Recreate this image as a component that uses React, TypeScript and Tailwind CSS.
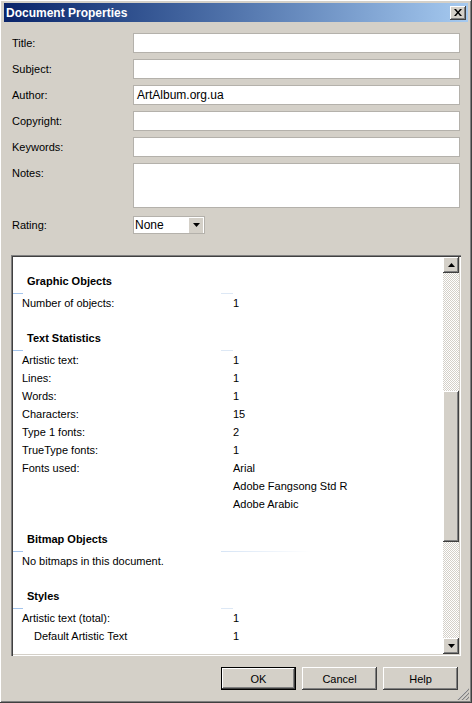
import React from "react";

const raised =
  "shadow-[inset_-1px_-1px_#404040,inset_1px_1px_#ffffff,inset_-2px_-2px_#808080,inset_2px_2px_#d4d0c8]";

function Field({ label, value, tall }: { label: string; value?: string; tall?: boolean }) {
  return (
    <div className="flex">
      <div className={`w-[121px] flex ${tall ? "items-start pt-[3px]" : "items-center"}`}>{label}</div>
      <div
        className={`w-[327px] ${tall ? "h-[45px]" : "h-[20px]"} bg-white border border-[#b4b1ab] flex items-center pl-[3px]`}
      >
        {value && <span className="text-[12px] leading-none">{value}</span>}
      </div>
    </div>
  );
}

function SectionHead({ title, wide, first }: { title: string; wide?: boolean; first?: boolean }) {
  return (
    <div
      className={`relative shrink-0 ${first ? "h-[37px]" : "h-[39px]"} flex items-end pb-[6px] pl-[14px] font-bold`}
    >
      {title}
      <div className="absolute left-0 bottom-0 w-[10px] h-px bg-[#a3c4ec]" />
      <div
        className={`absolute left-[208px] bottom-0 h-px ${
          wide ? "w-[90px] bg-gradient-to-r from-[#d6e4f5] to-white" : "w-[12px] bg-[#dde8f5]"
        }`}
      />
    </div>
  );
}

function Row({ label, value, indent }: { label: string; value?: string; indent?: boolean }) {
  return (
    <div className="flex shrink-0 h-[18px] items-center">
      <div className={`w-[220px] ${indent ? "pl-[21px]" : "pl-[9px]"}`}>{label}</div>
      <div>{value}</div>
    </div>
  );
}

function ArrowBtn({ up }: { up?: boolean }) {
  return (
    <div className={`shrink-0 w-[16px] h-[16px] bg-[#d4d0c8] ${raised} flex items-center justify-center`}>
      <svg width="7" height="4" viewBox="0 0 7 4">
        {up ? <path d="M3.5 0 L7 4 L0 4 Z" fill="#000" /> : <path d="M0 0 L7 0 L3.5 4 Z" fill="#000" />}
      </svg>
    </div>
  );
}

function Button({ children, def }: { children: React.ReactNode; def?: boolean }) {
  return (
    <div
      className={`w-[75px] h-[23px] flex items-center justify-center bg-[#d4d0c8] ${
        def
          ? "border border-black shadow-[inset_-1px_-1px_#404040,inset_1px_1px_#ffffff,inset_-2px_-2px_#808080]"
          : raised
      }`}
    >
      {children}
    </div>
  );
}

export default function App() {
  return (
    <div
      className="relative w-[472px] h-[703px] bg-[#d4d0c8] flex flex-col pt-[3px] text-[11px] leading-[14px] text-black shadow-[inset_-1px_-1px_#404040,inset_1px_1px_#ffffff,inset_-2px_-2px_#808080,inset_2px_2px_#d4d0c8]"
      style={{ fontFamily: '"Liberation Sans", Arial, sans-serif' }}
    >
      {/* title bar */}
      <div className="mx-[4px] h-[19px] bg-gradient-to-r from-[#0a246a] to-[#a6caf0] flex items-center justify-between pl-[2px] pr-[2px]">
        <span className="text-white font-bold text-[12px]">Document Properties</span>
        <div className={`w-[16px] h-[14px] bg-[#d4d0c8] ${raised} flex items-center justify-center`}>
          <svg width="8" height="7" viewBox="0 0 8 7">
            <path d="M0 0 L2 0 L4 2.5 L6 0 L8 0 L5 3.5 L8 7 L6 7 L4 4.5 L2 7 L0 7 L3 3.5 Z" fill="#000" />
          </svg>
        </div>
      </div>

      {/* form */}
      <div className="mt-[11px] pl-[12px] flex flex-col gap-[6px]">
        <Field label="Title:" />
        <Field label="Subject:" />
        <Field label="Author:" value="ArtAlbum.org.ua" />
        <Field label="Copyright:" />
        <Field label="Keywords:" />
        <div className="mb-[2px]">
          <Field label="Notes:" tall />
        </div>
        <div className="flex">
          <div className="w-[121px] flex items-center">Rating:</div>
          <div className="w-[72px] h-[18px] bg-white border border-[#b4b1ab] flex items-center justify-between pl-[1px] pr-[1px]">
            <span className="text-[12px] leading-none">None</span>
            <div className="w-[14px] h-[15px] bg-[#d4d0c8] flex items-center justify-center">
              <svg width="7" height="4" viewBox="0 0 7 4">
                <path d="M0 0 L7 0 L3.5 4 Z" fill="#000" />
              </svg>
            </div>
          </div>
        </div>
      </div>

      {/* statistics panel */}
      <div className="ml-[11px] mt-[21px] w-[450px] h-[401px] p-[2px] bg-white shadow-[inset_1px_1px_#808080,inset_2px_2px_#404040,inset_-1px_-1px_#ffffff,inset_-2px_-2px_#d4d0c8] flex">
        <div className="flex-1 overflow-hidden flex flex-col">
          <SectionHead title="Graphic Objects" first />
          <Row label="Number of objects:" value="1" />
          <SectionHead title="Text Statistics" />
          <Row label="Artistic text:" value="1" />
          <Row label="Lines:" value="1" />
          <Row label="Words:" value="1" />
          <Row label="Characters:" value="15" />
          <Row label="Type 1 fonts:" value="2" />
          <Row label="TrueType fonts:" value="1" />
          <Row label="Fonts used:" value="Arial" />
          <Row label="" value="Adobe Fangsong Std R" />
          <Row label="" value="Adobe Arabic" />
          <SectionHead title="Bitmap Objects" wide />
          <Row label="No bitmaps in this document." />
          <SectionHead title="Styles" />
          <Row label="Artistic text (total):" value="1" />
          <Row label="Default Artistic Text" value="1" indent />
          <Row label="" />
        </div>
        <div className="w-[16px] flex flex-col bg-[repeating-conic-gradient(#ffffff_0_25%,#d4d0c8_0_50%)] bg-[length:2px_2px]">
          <ArrowBtn up />
          <div className="shrink-0 h-[118px]" />
          <div className={`shrink-0 h-[151px] bg-[#d4d0c8] ${raised}`} />
          <div className="flex-1" />
          <ArrowBtn />
        </div>
      </div>

      {/* buttons */}
      <div className="mt-[11px] flex justify-end gap-[6px] pr-[14px]">
        <Button def>OK</Button>
        <Button>Cancel</Button>
        <Button>Help</Button>
      </div>

      {/* size grip */}
      <svg className="absolute right-[3px] bottom-[3px]" width="12" height="12" viewBox="0 0 12 12">
        <path d="M11 1 L1 11 M11 5 L5 11 M11 9 L9 11" stroke="#ffffff" strokeWidth="1" />
        <path d="M12 1 L1 12 M12 5 L5 12 M12 9 L9 12" stroke="#808080" strokeWidth="1.2" />
      </svg>
    </div>
  );
}
